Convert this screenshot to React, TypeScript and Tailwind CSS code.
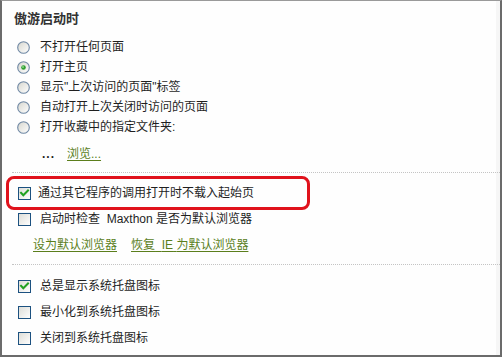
import React from "react";

const font = { fontFamily: '"Liberation Sans", "Noto Sans CJK SC", sans-serif' };

function Radio({ checked }: { checked?: boolean }) {
  return (
    <svg width="13" height="13" viewBox="0 0 13 13" className="shrink-0">
      <defs>
        <linearGradient id={checked ? "rg1" : "rg0"} x1="0" y1="0" x2="1" y2="1">
          <stop offset="0" stopColor="#d6d6ce" />
          <stop offset="1" stopColor="#ffffff" />
        </linearGradient>
      </defs>
      <circle cx="6.5" cy="6.5" r="5.8" fill={`url(#${checked ? "rg1" : "rg0"})`} stroke="#6f88a4" strokeWidth="1.1" />
      {checked && (
        <>
          <circle cx="6.5" cy="6.5" r="2.3" fill="#2f9e2f" />
          <circle cx="6" cy="6" r="0.9" fill="#8fdc8f" />
        </>
      )}
    </svg>
  );
}

function Check({ checked }: { checked?: boolean }) {
  return (
    <svg width="13" height="13" viewBox="0 0 13 13" className="shrink-0">
      <defs>
        <linearGradient id="cg" x1="0" y1="0" x2="1" y2="1">
          <stop offset="0" stopColor="#dcdcd6" />
          <stop offset="1" stopColor="#ffffff" />
        </linearGradient>
      </defs>
      <rect x="0.5" y="0.5" width="12" height="12" fill="url(#cg)" stroke="#1c5180" strokeWidth="1" />
      {checked && (
        <path d="M3 5.8 L5.3 8.2 L10 3.5" fill="none" stroke="#21a121" strokeWidth="2" strokeLinecap="square" />
      )}
    </svg>
  );
}

function RadioRow({ label, checked }: { label: string; checked?: boolean }) {
  return (
    <div className="flex h-5 items-center">
      <div className="ml-[15px] mr-[10px] flex items-center">
        <Radio checked={checked} />
      </div>
      <span>{label}</span>
    </div>
  );
}

function CheckRow({ label, checked, h }: { label: React.ReactNode; checked?: boolean; h: string }) {
  return (
    <div className={`flex items-center ${h}`}>
      <div className="ml-[16px] mr-[9px] flex items-center">
        <Check checked={checked} />
      </div>
      <span>{label}</span>
    </div>
  );
}

export default function App() {
  return (
    <div
      style={font}
      className="h-[357px] w-[502px] overflow-hidden border-t border-l-2 border-r-2 border-b-2 border-t-[#9a9a9a] border-l-[#6b6b6b] border-r-[#6b6b6b] border-b-[#6b6b6b] bg-[#fefefe] text-[12px] leading-4 text-[#1f1f1f] shadow-[inset_-4px_0_0_#f6f6f6]"
    >
      <div className="pl-[12px] pt-[10px] text-[13px] font-bold leading-4 text-[#333]">傲游启动时</div>
      <div className="mt-[10px] flex flex-col">
        <RadioRow label="不打开任何页面" />
        <RadioRow label="打开主页" checked />
        <RadioRow label={'显示"上次访问的页面"标签'} />
        <RadioRow label="自动打开上次关闭时访问的页面" />
        <RadioRow label="打开收藏中的指定文件夹:" />
      </div>
      <div className="mt-[7px] flex h-5 items-center">
        <span className="ml-[40px] font-bold tracking-[1px]">...</span>
        <span className="ml-[12px] text-[#5b7e1c] underline underline-offset-2">浏览...</span>
      </div>
      <div className="ml-[10px] mt-2 border-t border-dotted border-[#c4c4c4]" />
      <div className="ml-[4px] mt-[3px] flex h-[34px] w-[304px] items-center rounded-[8px] border-[3px] border-[#e0121c]">
        <div className="ml-[9px] mr-[7px] flex items-center">
          <Check checked />
        </div>
        <span>通过其它程序的调用打开时不载入起始页</span>
      </div>
      <CheckRow
        h="h-[18px]"
        label={<>启动时检查{"\u00a0\u00a0"}Maxthon{"\u00a0"}是否为默认浏览器</>}
      />
      <div className="mt-[9px] flex h-4 items-center text-[#5b7e1c]">
        <span className="ml-[31px] underline underline-offset-2">设为默认浏览器</span>
        <span className="ml-[14px] underline underline-offset-2">
          恢复{"\u00a0\u00a0"}IE{"\u00a0"}为默认浏览器
        </span>
      </div>
      <div className="ml-[10px] mt-[11px] border-t border-dotted border-[#c4c4c4]" />
      <div className="mt-[8px] flex flex-col">
        <CheckRow h="h-[26px]" label="总是显示系统托盘图标" checked />
        <CheckRow h="h-[26px]" label="最小化到系统托盘图标" />
        <CheckRow h="h-[26px]" label="关闭到系统托盘图标" />
      </div>
    </div>
  );
}
